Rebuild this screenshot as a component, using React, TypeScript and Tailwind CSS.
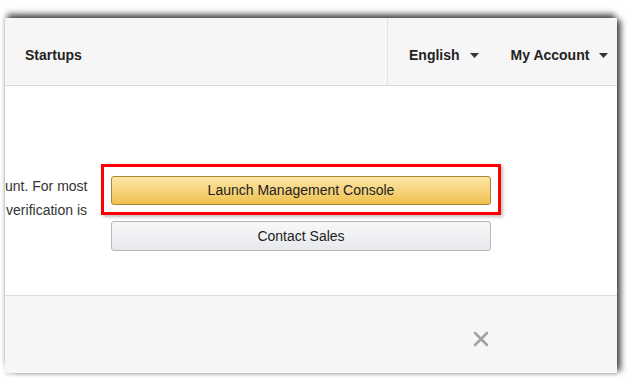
import { X } from 'lucide-react';

const Caret = () => (
  <svg width="9" height="5" viewBox="0 0 9 5" className="ml-[10px]">
    <path d="M0 0 L9 0 L4.5 5 Z" fill="#333" />
  </svg>
);

export default function App() {
  return (
    <div className="w-[633px] h-[378px] bg-white overflow-hidden pt-[18px] pl-[5px] font-['Liberation_Sans',Arial,sans-serif]">
      <div className="relative w-[612px] h-[355px] flex flex-col bg-white shadow-[0_-6px_6px_-2px_rgba(0,0,0,0.65),6px_0_6px_-2px_rgba(0,0,0,0.65),0_2px_3px_rgba(0,0,0,0.12)]">
        {/* header */}
        <div className="h-[68px] flex bg-[#f6f6f6] border-b border-[#d9d9d9] text-[14px] leading-[18px] font-bold text-[#232323]">
          <div className="w-[382px] pt-[28px] pl-[20px]">Startups</div>
          <div className="flex-1 flex items-start pt-[28px] border-l border-[#e3e3e3] pl-[21px]">
            <span>English</span>
            <span className="mt-[7px]"><Caret /></span>
            <span className="ml-[32px]">My Account</span>
            <span className="mt-[7px]"><Caret /></span>
          </div>
        </div>

        {/* body */}
        <div className="h-[209px] flex pt-[88px]">
          <div className="w-[82px] text-[14px] leading-[24px] text-[#333] text-right whitespace-nowrap">
            <div>unt. For most</div>
            <div>verification is</div>
          </div>
          <div className="ml-[24px] w-[380px] pt-[2px] flex flex-col gap-[16px]">
            <div className="relative">
              <button className="w-full h-[29px] rounded-[3px] border border-[#a88734] bg-gradient-to-b from-[#fde5a6] to-[#efc14c] text-[14px] text-[#222]">
                Launch Management Console
              </button>
              <div className="absolute left-[-10px] right-[-10px] top-[-12px] bottom-[-10px] border-[3px] border-[#f00] shadow-[2px_2px_3px_rgba(0,0,0,0.25)] pointer-events-none" />
            </div>
            <button className="w-full h-[30px] rounded-[3px] border border-[#b4b7bd] bg-gradient-to-b from-[#f7f8fa] to-[#e8e9ec] text-[14px] text-[#222]">
              Contact Sales
            </button>
          </div>
        </div>

        {/* footer */}
        <div className="flex-1 bg-[#f6f6f6] border-t border-[#dcdcdc] pt-[31px] pl-[464px]">
          <X size={24} strokeWidth={2.6} className="text-[#a3a3a3]" />
        </div>
      </div>
    </div>
  );
}
